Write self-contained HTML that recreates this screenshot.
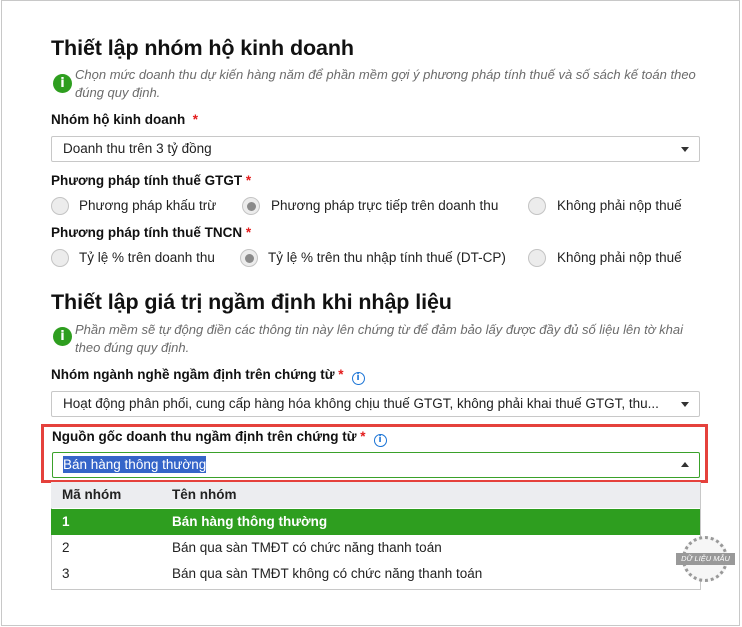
<!DOCTYPE html>
<html><head><meta charset="utf-8">
<style>
*{box-sizing:border-box;margin:0;padding:0}
body{width:742px;height:627px;background:#fff;position:relative;overflow:hidden;font-family:"Liberation Sans","DejaVu Sans",sans-serif;color:#222}
.frame{position:absolute;left:1px;top:0px;width:739px;height:626px;border:1px solid #c8c8c8}
.a{position:absolute;white-space:nowrap}
h1{position:absolute;left:51px;font-size:21.5px;font-weight:bold;color:#111;white-space:nowrap;letter-spacing:-0.1px}
.lbl{position:absolute;left:51px;font-size:13.5px;font-weight:bold;color:#111;white-space:nowrap}
.req{color:#e31b1b}
.note{position:absolute;left:75px;font-size:13px;font-style:italic;color:#6b6b6b;line-height:18px;width:630px}
.gi{position:absolute;left:53px;width:19px;height:19px;border-radius:50%;background:#2e9e1f;color:#fff;font-weight:bold;font-size:13px;text-align:center;line-height:19px;font-family:"DejaVu Sans",sans-serif}
.sel{position:absolute;left:51px;width:649px;height:26px;border:1px solid #c8c8c8;border-radius:2px;font-size:13.5px;padding-left:11px;line-height:24px;color:#222}
.arr{position:absolute;right:10px;top:10px;width:0;height:0;border-left:4.5px solid transparent;border-right:4.5px solid transparent;border-top:5px solid #333}
.up{border-top:none;border-bottom:5px solid #333}
.r{position:absolute;width:18px;height:18px;border-radius:50%;background:#ececec;border:1px solid #c4c4c4}
.r.c::after{content:"";position:absolute;left:3.5px;top:3.5px;width:9px;height:9px;border-radius:50%;background:#8a8a8a}
.rt{position:absolute;font-size:13.5px;color:#222;white-space:nowrap}
.bi{display:inline-block;width:13px;height:13px;border:1.3px solid #1b74d6;border-radius:50%;color:#1b74d6;font-size:9px;line-height:10px;text-align:center;font-weight:bold;vertical-align:-1px;margin-left:8px;font-family:"DejaVu Sans",sans-serif}
.row{position:absolute;left:51px;width:649px;height:26px;font-size:13.5px;line-height:26px}
.row span{position:absolute}
</style></head><body>
<div class="frame"></div>

<h1 style="top:36px">Thiết lập nhóm hộ kinh doanh</h1>
<div class="gi" style="top:74px">i</div>
<div class="note" style="top:66px">Chọn mức doanh thu dự kiến hàng năm để phần mềm gợi ý phương pháp tính thuế và số sách kế toán theo đúng quy định.</div>

<div class="lbl" style="top:112px">Nhóm hộ kinh doanh &nbsp;<span class="req">*</span></div>
<div class="sel" style="top:136px">Doanh thu trên 3 tỷ đồng<div class="arr"></div></div>

<div class="lbl" style="top:173px">Phương pháp tính thuế GTGT <span class="req">*</span></div>
<div class="r" style="left:51px;top:197px"></div><div class="rt" style="left:79px;top:198px">Phương pháp khấu trừ</div>
<div class="r c" style="left:242px;top:197px"></div><div class="rt" style="left:271px;top:198px">Phương pháp trực tiếp trên doanh thu</div>
<div class="r" style="left:528px;top:197px"></div><div class="rt" style="left:557px;top:198px">Không phải nộp thuế</div>

<div class="lbl" style="top:225px">Phương pháp tính thuế TNCN <span class="req">*</span></div>
<div class="r" style="left:51px;top:249px"></div><div class="rt" style="left:79px;top:250px">Tỷ lệ % trên doanh thu</div>
<div class="r c" style="left:240px;top:249px"></div><div class="rt" style="left:268px;top:250px">Tỷ lệ % trên thu nhập tính thuế (DT-CP)</div>
<div class="r" style="left:528px;top:249px"></div><div class="rt" style="left:557px;top:250px">Không phải nộp thuế</div>

<h1 style="top:290px">Thiết lập giá trị ngầm định khi nhập liệu</h1>
<div class="gi" style="top:327px">i</div>
<div class="note" style="top:321px">Phần mềm sẽ tự động điền các thông tin này lên chứng từ để đảm bảo lấy được đầy đủ số liệu lên tờ khai theo đúng quy định.</div>

<div class="lbl" style="top:367px">Nhóm ngành nghề ngầm định trên chứng từ <span class="req">*</span><span class="bi">i</span></div>
<div class="sel" style="top:391px">Hoạt động phân phối, cung cấp hàng hóa không chịu thuế GTGT, không phải khai thuế GTGT, thu...<div class="arr"></div></div>

<div style="position:absolute;left:41px;top:424px;width:667px;height:59px;border:3px solid #e5413c"></div>
<div class="lbl" style="top:429px;left:52px">Nguồn gốc doanh thu ngầm định trên chứng từ <span class="req">*</span><span class="bi">i</span></div>
<div class="sel" style="top:452px;left:52px;width:648px;border-color:#3aa12a;padding-left:10px"><span style="background:#3565c9;color:#fff;padding:1px 0">Bán hàng thông thường</span><div class="arr up" style="top:9px"></div></div>

<div style="position:absolute;left:51px;top:482px;width:650px;height:108px;border:1px solid #c8c8c8;border-top:none;background:#fff"></div>
<div class="row" style="top:482px;background:#ecedf0;font-weight:bold;color:#222"><span style="left:11px">Mã nhóm</span><span style="left:121px">Tên nhóm</span></div>
<div class="row" style="top:509px;background:#2e9e1f;color:#fff;font-weight:bold"><span style="left:11px">1</span><span style="left:121px">Bán hàng thông thường</span></div>
<div class="row" style="top:535px"><span style="left:11px">2</span><span style="left:121px">Bán qua sàn TMĐT có chức năng thanh toán</span></div>
<div class="row" style="top:561px"><span style="left:11px">3</span><span style="left:121px">Bán qua sàn TMĐT không có chức năng thanh toán</span></div>

<div style="position:absolute;left:682px;top:536px;width:46px;height:46px;border-radius:50%;border:3px dotted #999;background:#f6f6f6"></div>
<div class="a" style="left:676px;top:553px;width:59px;height:12px;background:#999;color:#fff;font-size:7.5px;font-style:italic;text-align:center;line-height:12px">DỮ LIỆU MẪU</div>
</body></html>
